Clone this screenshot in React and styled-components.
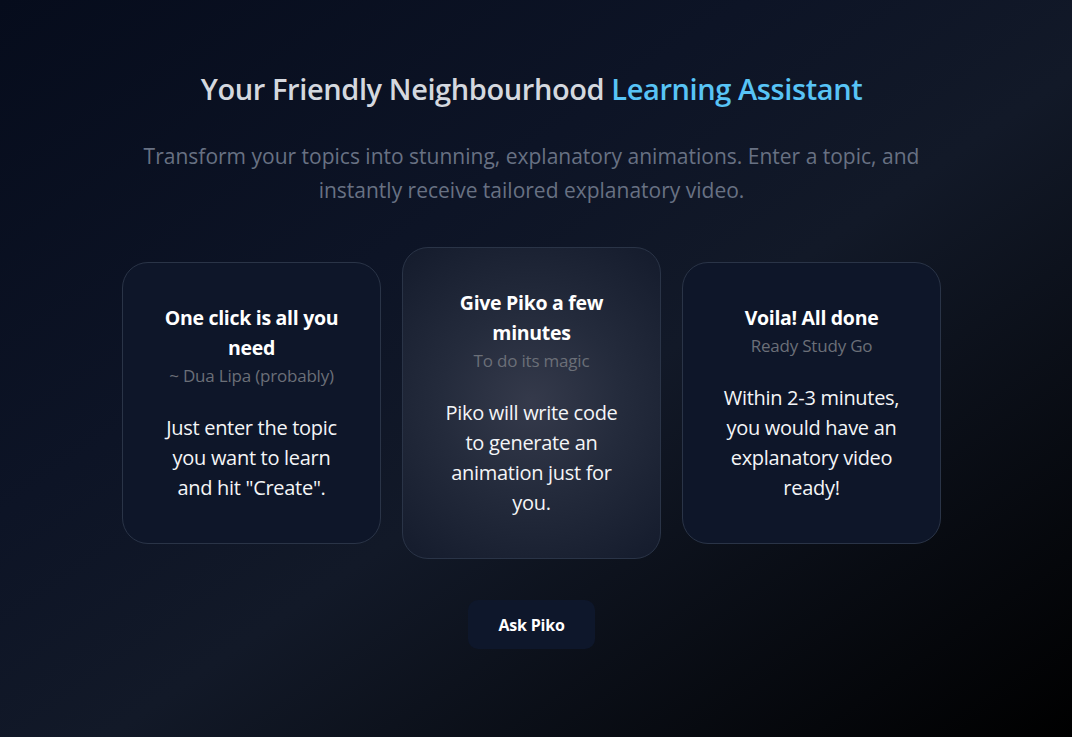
import styled, { createGlobalStyle } from "styled-components";

const GlobalStyle = createGlobalStyle`
  html, body {
    margin: 0;
    padding: 0;
  }
  body {
    font-family: "Open Sans", "Noto Sans", sans-serif;
    background: #000;
  }
`;

const Page = styled.main`
  min-height: 737px;
  box-sizing: border-box;
  padding: 71px 9px 0 0;
  display: flex;
  flex-direction: column;
  align-items: center;
  background: linear-gradient(
    to bottom right,
    #060c1c 0%,
    #0d1426 35%,
    #121928 55%,
    #000000 100%
  );
`;

const Heading = styled.h1`
  margin: 0;
  font-size: 29px;
  line-height: 36px;
  font-weight: 600;
  letter-spacing: -0.4px;
  color: #d4d8df;
  text-align: center;
`;

const Accent = styled.span`
  color: #58c4f6;
`;

const Lead = styled.p`
  margin: 32px 0 0;
  max-width: 800px;
  font-size: 21px;
  line-height: 34px;
  letter-spacing: 0;
  color: #687183;
  text-align: center;
`;

const Steps = styled.section`
  margin-top: 40px;
  display: flex;
  align-items: center;
  gap: 21px;
`;

const Card = styled.article`
  width: 259px;
  box-sizing: border-box;
  padding: 40px 36px;
  border-radius: 26px;
  border: 1px solid #2a3447;
  background: ${(p) =>
    p.$glow
      ? "radial-gradient(circle at 50% 50%, #353a4b 0%, #242b3c 45%, #141b2c 100%)"
      : "#0e1629"};
  text-align: center;
  color: #fff;
`;

const CardTitle = styled.h2`
  margin: 0;
  font-size: 19.5px;
  line-height: 30px;
  font-weight: 700;
  letter-spacing: -0.3px;
`;

const CardNote = styled.div`
  font-size: 17px;
  line-height: 26px;
  color: #6b6f78;
  letter-spacing: -0.2px;
`;

const CardText = styled.p`
  margin: 24px 0 0;
  font-size: 20px;
  line-height: 30px;
  letter-spacing: -0.3px;
  color: #f4f5f7;
`;

const AskButton = styled.button`
  margin-top: 41px;
  width: 127px;
  height: 49px;
  border: none;
  border-radius: 10px;
  background: #0e172b;
  color: #fff;
  font-family: inherit;
  font-size: 16px;
  font-weight: 700;
  letter-spacing: -0.2px;
  cursor: pointer;
`;

const steps = [
  {
    title: "One click is all you need",
    note: "~ Dua Lipa (probably)",
    text: 'Just enter the topic you want to learn and hit "Create".',
  },
  {
    title: "Give Piko a few minutes",
    note: "To do its magic",
    text: "Piko will write code to generate an animation just for you.",
    glow: true,
  },
  {
    title: "Voila! All done",
    note: "Ready Study Go",
    text: "Within 2-3 minutes, you would have an explanatory video ready!",
  },
];

export default function App() {
  return (
    <>
      <GlobalStyle />
      <Page>
        <Heading>
          Your Friendly Neighbourhood <Accent>Learning Assistant</Accent>
        </Heading>
        <Lead>
          Transform your topics into stunning, explanatory animations. Enter a
          topic, and instantly receive tailored explanatory video.
        </Lead>
        <Steps>
          {steps.map((s) => (
            <Card key={s.title} $glow={s.glow}>
              <CardTitle>{s.title}</CardTitle>
              <CardNote>{s.note}</CardNote>
              <CardText>{s.text}</CardText>
            </Card>
          ))}
        </Steps>
        <AskButton>Ask Piko</AskButton>
      </Page>
    </>
  );
}
